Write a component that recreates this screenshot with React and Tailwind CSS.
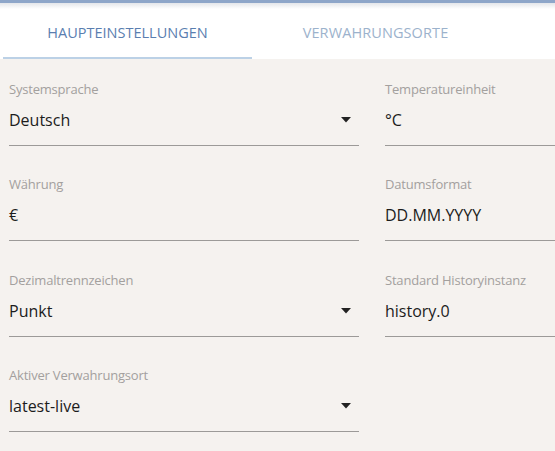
import React from 'react';

const font = { fontFamily: '"Open Sans", "Noto Sans", sans-serif' };

function Field({ label, value, select }) {
  return (
    <div className="w-[350px] shrink-0">
      <div className="text-[13px] leading-[18px] text-[#a3a09e] tracking-[-0.2px]">{label}</div>
      <div className="mt-[9px] h-[26px] flex items-center justify-between pr-[8px]">
        <span className="text-[16px] text-[#1c1c1c]">{value}</span>
        {select && (
          <svg width="10" height="6" viewBox="0 0 10 6" className="text-[#222]">
            <path d="M0 0h10L5 5.5z" fill="currentColor" />
          </svg>
        )}
      </div>
      <div className="mt-[12px] h-px bg-[#9c9a98]" />
    </div>
  );
}

export default function App() {
  const rows = [
    [{ label: 'Systemsprache', value: 'Deutsch', select: true }, { label: 'Temperatureinheit', value: '°C' }],
    [{ label: 'Währung', value: '€' }, { label: 'Datumsformat', value: 'DD.MM.YYYY' }],
    [{ label: 'Dezimaltrennzeichen', value: 'Punkt', select: true }, { label: 'Standard Historyinstanz', value: 'history.0' }],
    [{ label: 'Aktiver Verwahrungsort', value: 'latest-live', select: true }, null],
  ];

  return (
    <div className="w-[555px] h-[451px] overflow-hidden bg-[#f5f2ef]" style={font}>
      <div className="h-[3px] bg-[#8ea6c9]" />
      <div className="h-[6px] bg-gradient-to-b from-[#e4e6ea] to-white" />
      <div className="bg-white flex pl-[3px] h-[50px]">
        <div className="w-[249px] flex flex-col">
          <div className="flex-1 flex items-center justify-center text-[14.5px] text-[#5a7eb0]">
            HAUPTEINSTELLUNGEN
          </div>
          <div className="h-[2px] bg-[#bcd1e6]" />
        </div>
        <div className="w-[247px] flex items-center justify-center text-[14.5px] text-[#9cb2cc] tracking-[0.1px] pb-[2px]">
          VERWAHRUNGSORTE
        </div>
      </div>
      <div className="pl-[9px] pt-[21px] flex flex-col gap-[29.4px]">
        {rows.map((r, i) => (
          <div key={i} className="flex gap-[26px]">
            <Field {...r[0]} />
            {r[1] && <Field {...r[1]} />}
          </div>
        ))}
      </div>
    </div>
  );
}
